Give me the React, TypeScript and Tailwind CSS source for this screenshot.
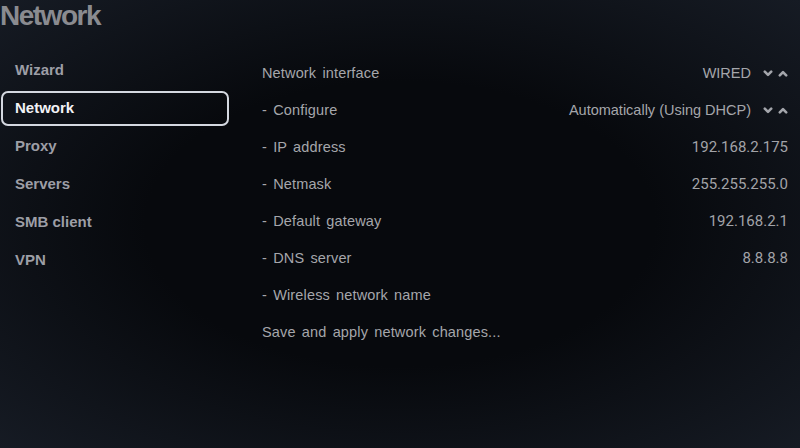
// Settings — network page
const MENU = ["Wizard", "Network", "Proxy", "Servers", "SMB client", "VPN"];

interface Row {
  label: string;
  value?: string;
  mono?: boolean;
  spinner?: boolean;
}

const ROWS: Row[] = [
  { label: "Network interface", value: "WIRED", spinner: true },
  { label: "- Configure", value: "Automatically (Using DHCP)", spinner: true },
  { label: "- IP address", value: "192.168.2.175", mono: true },
  { label: "- Netmask", value: "255.255.255.0", mono: true },
  { label: "- Default gateway", value: "192.168.2.1", mono: true },
  { label: "- DNS server", value: "8.8.8.8", mono: true },
  { label: "- Wireless network name" },
  { label: "Save and apply network changes..." },
];

function Chevron({ up }: { up?: boolean }) {
  return (
    <svg width="10" height="7" viewBox="0 0 10 7" className="block">
      <polyline
        points={up ? "1.8,5.3 5,2.1 8.2,5.3" : "1.8,1.7 5,4.9 8.2,1.7"}
        fill="none"
        stroke="#a4a6ac"
        strokeWidth="2.6"
        strokeLinecap="round"
        strokeLinejoin="round"
      />
    </svg>
  );
}

export default function App() {
  return (
    <div className="w-[800px] h-[448px] overflow-hidden bg-[radial-gradient(ellipse_at_center,#07090d_45%,#161b24_100%)] font-['Liberation_Sans',Arial,sans-serif]">
      <h1 className="h-[34px] pt-[1px] text-[28px] leading-[30px] font-bold tracking-[-1.5px] text-[#8a8b90]">
        Network
      </h1>

      <div className="flex">
        <aside className="w-[229px] pt-[17px] pl-[1px]">
          {MENU.map((m) =>
            m === "Network" ? (
              <div
                key={m}
                className="h-[35px] my-[1.5px] flex items-center pl-[12px] text-[15px] font-bold border-2 border-[#d4d8e0] rounded-[7px] text-[#f2f2f6]"
              >
                {m}
              </div>
            ) : (
              <div
                key={m}
                className="h-[38px] flex items-center pl-[14px] text-[15px] font-bold text-[#9d9ea6]"
              >
                {m}
              </div>
            )
          )}
        </aside>

        <section className="flex-1 ml-[33px] mr-[12px] pt-[21px]">
          {ROWS.map((r) => (
            <div key={r.label} className="h-[37px] flex items-center text-[14.5px] text-[#a5a6ab]">
              <span className="[word-spacing:2px] tracking-[0.15px]">{r.label}</span>
              {r.value && (
                <span
                  className={[
                    "ml-auto",
                    r.mono ? "font-['Roboto',sans-serif] text-[15px] text-[#a2a3a8]" : "",
                  ].join(" ")}
                >
                  {r.value}
                </span>
              )}
              {r.spinner && (
                <span className="flex items-center gap-[5px] ml-[12px]">
                  <Chevron />
                  <Chevron up />
                </span>
              )}
            </div>
          ))}
        </section>
      </div>
    </div>
  );
}
